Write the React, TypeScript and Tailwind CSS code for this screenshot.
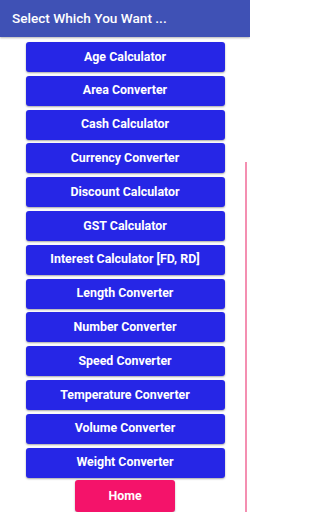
import React from "react";

const items = [
  "Age Calculator",
  "Area Converter",
  "Cash Calculator",
  "Currency Converter",
  "Discount Calculator",
  "GST Calculator",
  "Interest Calculator [FD, RD]",
  "Length Converter",
  "Number Converter",
  "Speed Converter",
  "Temperature Converter",
  "Volume Converter",
  "Weight Converter",
];

export default function App() {
  return (
    <div className="relative w-[250px] h-[512px] overflow-hidden bg-white" style={{ fontFamily: "Roboto, 'Noto Sans', sans-serif" }}>
      <div className="h-[37px] bg-[#3f51b5] flex items-center pl-[12px] text-white text-[13.6px] font-medium shadow-[0_1px_2px_rgba(0,0,0,0.3)]">
        Select Which You Want ...
      </div>
      <div className="flex flex-col items-center gap-[3.8px] pt-[5px]">
        {items.map((t) => (
          <div
            key={t}
            className="w-[199px] h-[30px] rounded-[3px] bg-[#2626e6] flex items-center justify-center text-white text-[12.4px] font-bold shadow-[0_1px_2px_rgba(0,0,0,0.35)]"
          >
            {t}
          </div>
        ))}
        <div className="w-[100px] h-[32px] rounded-[3px] bg-[#f4136a] flex items-center justify-center text-white text-[12.4px] font-bold shadow-[0_1px_2px_rgba(0,0,0,0.3)] -mt-[1px]">
          Home
        </div>
      </div>
      <div className="absolute right-[3px] top-[162px] bottom-0 w-[2px] bg-[#f48fb1]" />
    </div>
  );
}
